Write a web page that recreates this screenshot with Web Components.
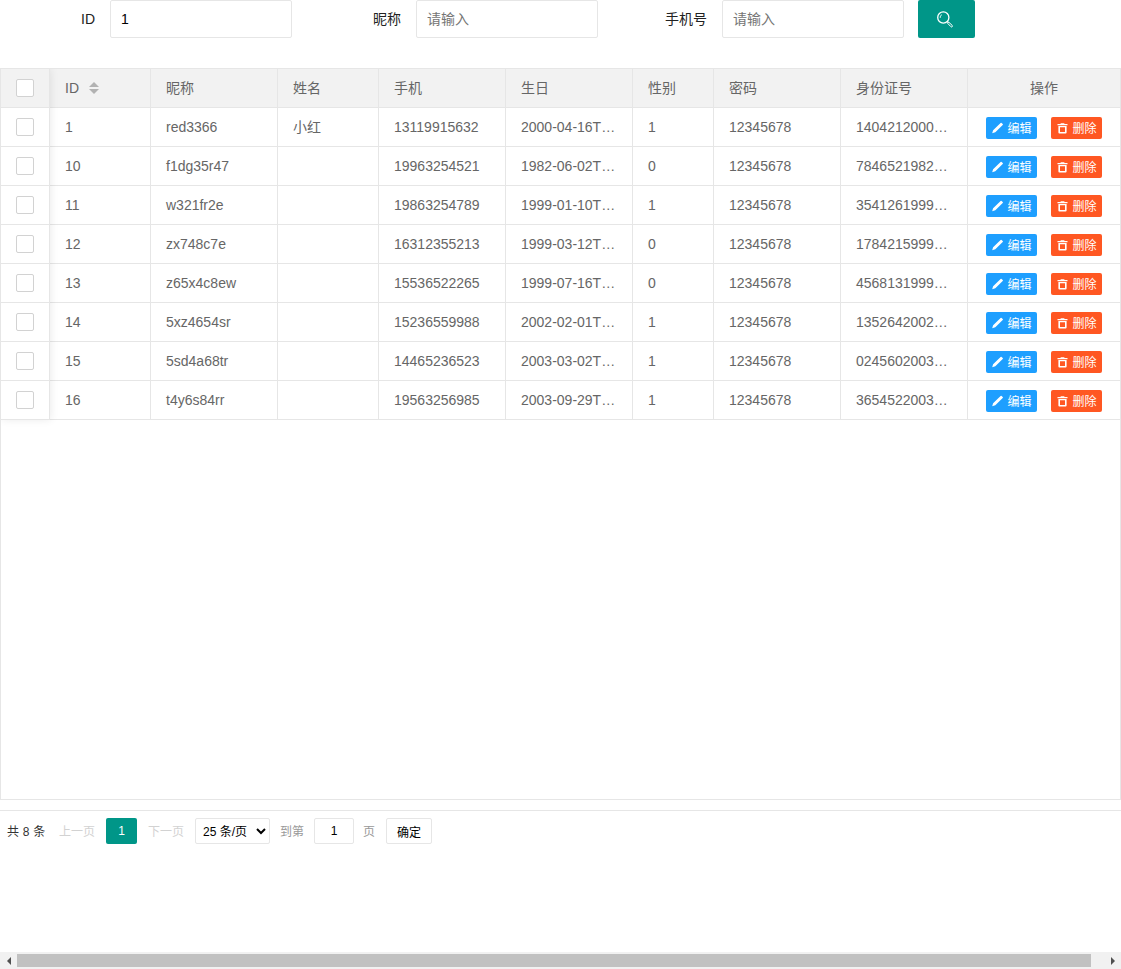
<!DOCTYPE html>
<html lang="zh">
<head>
<meta charset="utf-8">
<title>用户列表</title>
<style>
    html, body { margin: 0; height: 100%; }
    body {
        display: flex;
        flex-direction: column;
        height: 100vh;
        overflow: hidden;
        background: #fff;
        font: 14px "Liberation Sans", "Noto Sans CJK SC", sans-serif;
        color: #666;
    }
</style>
</head>
<body>
<search-form>
    <search-field label="ID" value="1"></search-field>
    <search-field label="昵称" placeholder="请输入"></search-field>
    <search-field label="手机号" placeholder="请输入"></search-field>
</search-form>
<data-table></data-table>
<table-pager></table-pager>
<page-scrollbar></page-scrollbar>

<script>
const searchFormTemplate = document.createElement('template');
searchFormTemplate.innerHTML = `
    <style>
        :host { display: flex; height: 38px; margin-bottom: 30px; flex: none; }
        button {
            width: 57px;
            height: 38px;
            margin-left: 14px;
            padding: 0;
            border: 0;
            border-radius: 2px;
            background: #009688;
            display: flex;
            align-items: center;
            justify-content: center;
        }
    </style>
    <slot></slot>
    <button type="button" aria-label="搜索">
        <svg width="19" height="20" viewBox="0 0 19 20" fill="none" stroke="#fff">
            <circle cx="6.3" cy="8.5" r="5.6" stroke-width="1.3"/>
            <path d="M3.2 8.8c0-1.5.5-2.5 1.5-3" stroke-width="1"/>
            <path d="M10.4 12.6l1 1" stroke-width="1.2"/>
            <path d="M11.6 13l3.6 3.4a.9.9 0 0 1-1.3 1.3l-3.4-3.5z" stroke-width="1"/>
        </svg>
    </button>
`;

class SearchForm extends HTMLElement {
    constructor() {
        super();
        this.attachShadow({mode: 'open'}).appendChild(searchFormTemplate.content.cloneNode(true));
    }
}
customElements.define('search-form', SearchForm);

const searchFieldTemplate = document.createElement('template');
searchFieldTemplate.innerHTML = `
    <style>
        :host { display: flex; width: 306px; height: 38px; }
        :host(:first-child) { width: 292px; }
        label {
            flex: 1;
            padding-right: 15px;
            text-align: right;
            line-height: 38px;
            color: #222;
        }
        input {
            box-sizing: border-box;
            flex: none;
            width: 182px;
            height: 38px;
            padding: 0 10px;
            border: 1px solid #e6e6e6;
            border-radius: 2px;
            outline: 0;
            font: inherit;
            color: #000;
            background: #fff;
        }
        input::placeholder { color: #757575; }
    </style>
    <label></label>
    <input type="text">
`;

class SearchField extends HTMLElement {
    constructor() {
        super();
        this.attachShadow({mode: 'open'}).appendChild(searchFieldTemplate.content.cloneNode(true));
    }

    connectedCallback() {
        const input = this.shadowRoot.querySelector('input');
        this.shadowRoot.querySelector('label').textContent = this.getAttribute('label');
        input.value = this.getAttribute('value') || '';
        input.placeholder = this.getAttribute('placeholder') || '';
    }
}
customElements.define('search-field', SearchField);

const USERS = [
    ['1', 'red3366', '小红', '13119915632', '2000-04-16T…', '1', '12345678', '1404212000…'],
    ['10', 'f1dg35r47', '', '19963254521', '1982-06-02T…', '0', '12345678', '7846521982…'],
    ['11', 'w321fr2e', '', '19863254789', '1999-01-10T…', '1', '12345678', '3541261999…'],
    ['12', 'zx748c7e', '', '16312355213', '1999-03-12T…', '0', '12345678', '1784215999…'],
    ['13', 'z65x4c8ew', '', '15536522265', '1999-07-16T…', '0', '12345678', '4568131999…'],
    ['14', '5xz4654sr', '', '15236559988', '2002-02-01T…', '1', '12345678', '1352642002…'],
    ['15', '5sd4a68tr', '', '14465236523', '2003-03-02T…', '1', '12345678', '0245602003…'],
    ['16', 't4y6s84rr', '', '19563256985', '2003-09-29T…', '1', '12345678', '3654522003…'],
];
const COLUMNS = ['ID', '昵称', '姓名', '手机', '生日', '性别', '密码', '身份证号'];

const rowButtonTemplate = document.createElement('template');
rowButtonTemplate.innerHTML = `
    <style>
        :host { display: inline-block; }
        button {
            display: flex;
            align-items: center;
            justify-content: center;
            gap: 4px;
            width: 51px;
            height: 22px;
            padding: 2px 0 0 1px;
            border: 0;
            border-radius: 2px;
            font: 12px/16px "Liberation Sans", "Noto Sans CJK SC", sans-serif;
            color: #fff;
            background: var(--btn-color, #1e9fff);
        }
        svg { width: 11px; height: 12px; margin-bottom: 2px; fill: #fff; flex: none; }
    </style>
    <button type="button"><svg viewBox="0 0 11 12"><path></path></svg><slot></slot></button>
`;

const ICONS = {
    edit: 'M.2 11.2l.9-3L8.6 .9a.7.7 0 0 1 1 0l1.1 1.1a.7.7 0 0 1 0 1L3.3 10.3z',
    trash: 'M3.8 1.2h3.4l.4.9h2.9v1.1H.5V2.100h2.900zM1.400 4h8.200v6.500a1 1 0 0 1-1 1H2.400a1 1 0 0 1-1-1zm1.600 1.200v4.900h5V5.200z',
};

class RowButton extends HTMLElement {
    constructor() {
        super();
        this.attachShadow({mode: 'open'}).appendChild(rowButtonTemplate.content.cloneNode(true));
    }

    connectedCallback() {
        this.shadowRoot.querySelector('path').setAttribute('d', ICONS[this.getAttribute('icon')]);
    }
}
customElements.define('row-button', RowButton);

const dataTableTemplate = document.createElement('template');
dataTableTemplate.innerHTML = `
    <style>
        :host {
            display: flex;
            flex: none;
            box-sizing: border-box;
            height: 732px;
            border: 1px solid #e6e6e6;
            color: #666;
            overflow: hidden;
        }
        .fixed {
            position: relative;
            z-index: 1;
            flex: none;
            width: 49px;
            align-self: flex-start;
            background: #fff;
            box-shadow: 1px 0 8px rgba(0, 0, 0, .08);
        }
        .fixed .cell { padding: 0; justify-content: center; }
        .main { flex: 1; min-width: 0; }
        .row {
            display: grid;
            grid-template-columns: 101px 127px 101px 127px 127px 81px 127px 127px 152px;
            height: 39px;
        }
        .cell {
            box-sizing: border-box;
            height: 39px;
            padding: 0 15px;
            display: flex;
            align-items: center;
            line-height: 20px;
            border-right: 1px solid #e6e6e6;
            border-bottom: 1px solid #e6e6e6;
            white-space: nowrap;
            overflow: hidden;
        }
        .head .cell, .fixed .head { background: #f2f2f2; }
        .cell:last-child { border-right: 0; }
        .fixed .cell:last-child { border-right: 1px solid #e6e6e6; }
        .ops { justify-content: center; gap: 14px; padding: 2px 0 0; }
        .center { justify-content: center; padding: 0; }
        input {
            appearance: none;
            box-sizing: border-box;
            width: 18px;
            height: 18px;
            margin: 0;
            border: 1px solid #d2d2d2;
            border-radius: 2px;
            background: #fff;
        }
        .carets { display: inline-flex; flex-direction: column; gap: 2px; margin-left: 10px; }
        .carets i { width: 0; height: 0; border: 5px solid transparent; }
        .carets .up { border-top: 0; border-bottom-color: #b2b2b2; }
        .carets .down { border-bottom: 0; border-top-color: #b2b2b2; }
    </style>
    <div class="fixed"></div>
    <div class="main"></div>
`;

class DataTable extends HTMLElement {
    constructor() {
        super();
        this.attachShadow({mode: 'open'}).appendChild(dataTableTemplate.content.cloneNode(true));
    }

    connectedCallback() {
        const checkbox = '<input type="checkbox">';
        const carets = '<span class="carets"><i class="up"></i><i class="down"></i></span>';
        const fixed = this.shadowRoot.querySelector('.fixed');
        const main = this.shadowRoot.querySelector('.main');

        fixed.innerHTML = `<div class="cell head">${checkbox}</div>` +
            USERS.map(() => `<div class="cell">${checkbox}</div>`).join('');

        const head = COLUMNS.map((name, i) => `<div class="cell">${name}${i === 0 ? carets : ''}</div>`).join('');
        const rows = USERS.map(user => `
            <div class="row">
                ${user.map(value => `<div class="cell">${value}</div>`).join('')}
                <div class="cell ops">
                    <row-button icon="edit">编辑</row-button>
                    <row-button icon="trash" style="--btn-color:#ff5722">删除</row-button>
                </div>
            </div>`).join('');
        main.innerHTML = `<div class="row head">${head}<div class="cell center">操作</div></div>${rows}`;
    }
}
customElements.define('data-table', DataTable);

const tablePagerTemplate = document.createElement('template');
tablePagerTemplate.innerHTML = `
    <style>
        :host {
            display: flex;
            align-items: center;
            flex: none;
            height: 26px;
            margin-top: 10px;
            padding: 7px 0 0 7px;
            border-top: 1px solid #e6e6e6;
            font: 12px/16px "Liberation Sans", "Noto Sans CJK SC", sans-serif;
            color: #333;
        }
        .total, .off, .muted { padding-top: 2px; }
        .total { width: 38px; word-spacing: .5px; white-space: nowrap; }
        .off { color: #d2d2d2; width: 37px; }
        .muted { color: #999; }
        .current {
            box-sizing: border-box;
            width: 31px;
            height: 26px;
            border-radius: 2px;
            background: #009688;
            color: #fff;
            text-align: center;
            line-height: 26px;
        }
        select, input, button {
            box-sizing: border-box;
            height: 26px;
            border: 1px solid #e6e6e6;
            border-radius: 2px;
            background: #fff;
            font: inherit;
            color: #000;
            outline: 0;
        }
        select { width: 75px; padding: 1px 0 0 3px; }
        input { width: 40px; padding: 0; text-align: center; }
        button { width: 46px; padding: 3px 0 0; }
    </style>
    <span class="total">共 8 条</span>
    <span class="off" style="margin-left:14px">上一页</span>
    <span class="current" style="margin-left:10px">1</span>
    <span class="off" style="margin-left:11px">下一页</span>
    <select style="margin-left:10px"><option>25 条/页</option></select>
    <span class="muted" style="margin-left:10px">到第</span>
    <input style="margin-left:10px" type="text" value="1">
    <span class="muted" style="margin-left:9px">页</span>
    <button style="margin-left:11px" type="button">确定</button>
`;

class TablePager extends HTMLElement {
    constructor() {
        super();
        this.attachShadow({mode: 'open'}).appendChild(tablePagerTemplate.content.cloneNode(true));
    }
}
customElements.define('table-pager', TablePager);

const pageScrollbarTemplate = document.createElement('template');
pageScrollbarTemplate.innerHTML = `
    <style>
        :host {
            display: flex;
            align-items: center;
            flex: none;
            height: 17px;
            margin-top: auto;
            background: #f1f1f1;
        }
        i { flex: none; width: 17px; display: flex; justify-content: center; }
        b { flex: 1; height: 13px; background: #c1c1c1; }
        .left::before, .right::before {
            content: "";
            border: 4px solid transparent;
            border-left-width: 0;
            border-right-color: #505050;
        }
        .right::before { transform: scaleX(-1); }
    </style>
    <i class="left"></i><b></b><span style="width:13px"></span><i class="right"></i>
`;

class PageScrollbar extends HTMLElement {
    constructor() {
        super();
        this.attachShadow({mode: 'open'}).appendChild(pageScrollbarTemplate.content.cloneNode(true));
    }
}
customElements.define('page-scrollbar', PageScrollbar);
</script>
</body>
</html>
